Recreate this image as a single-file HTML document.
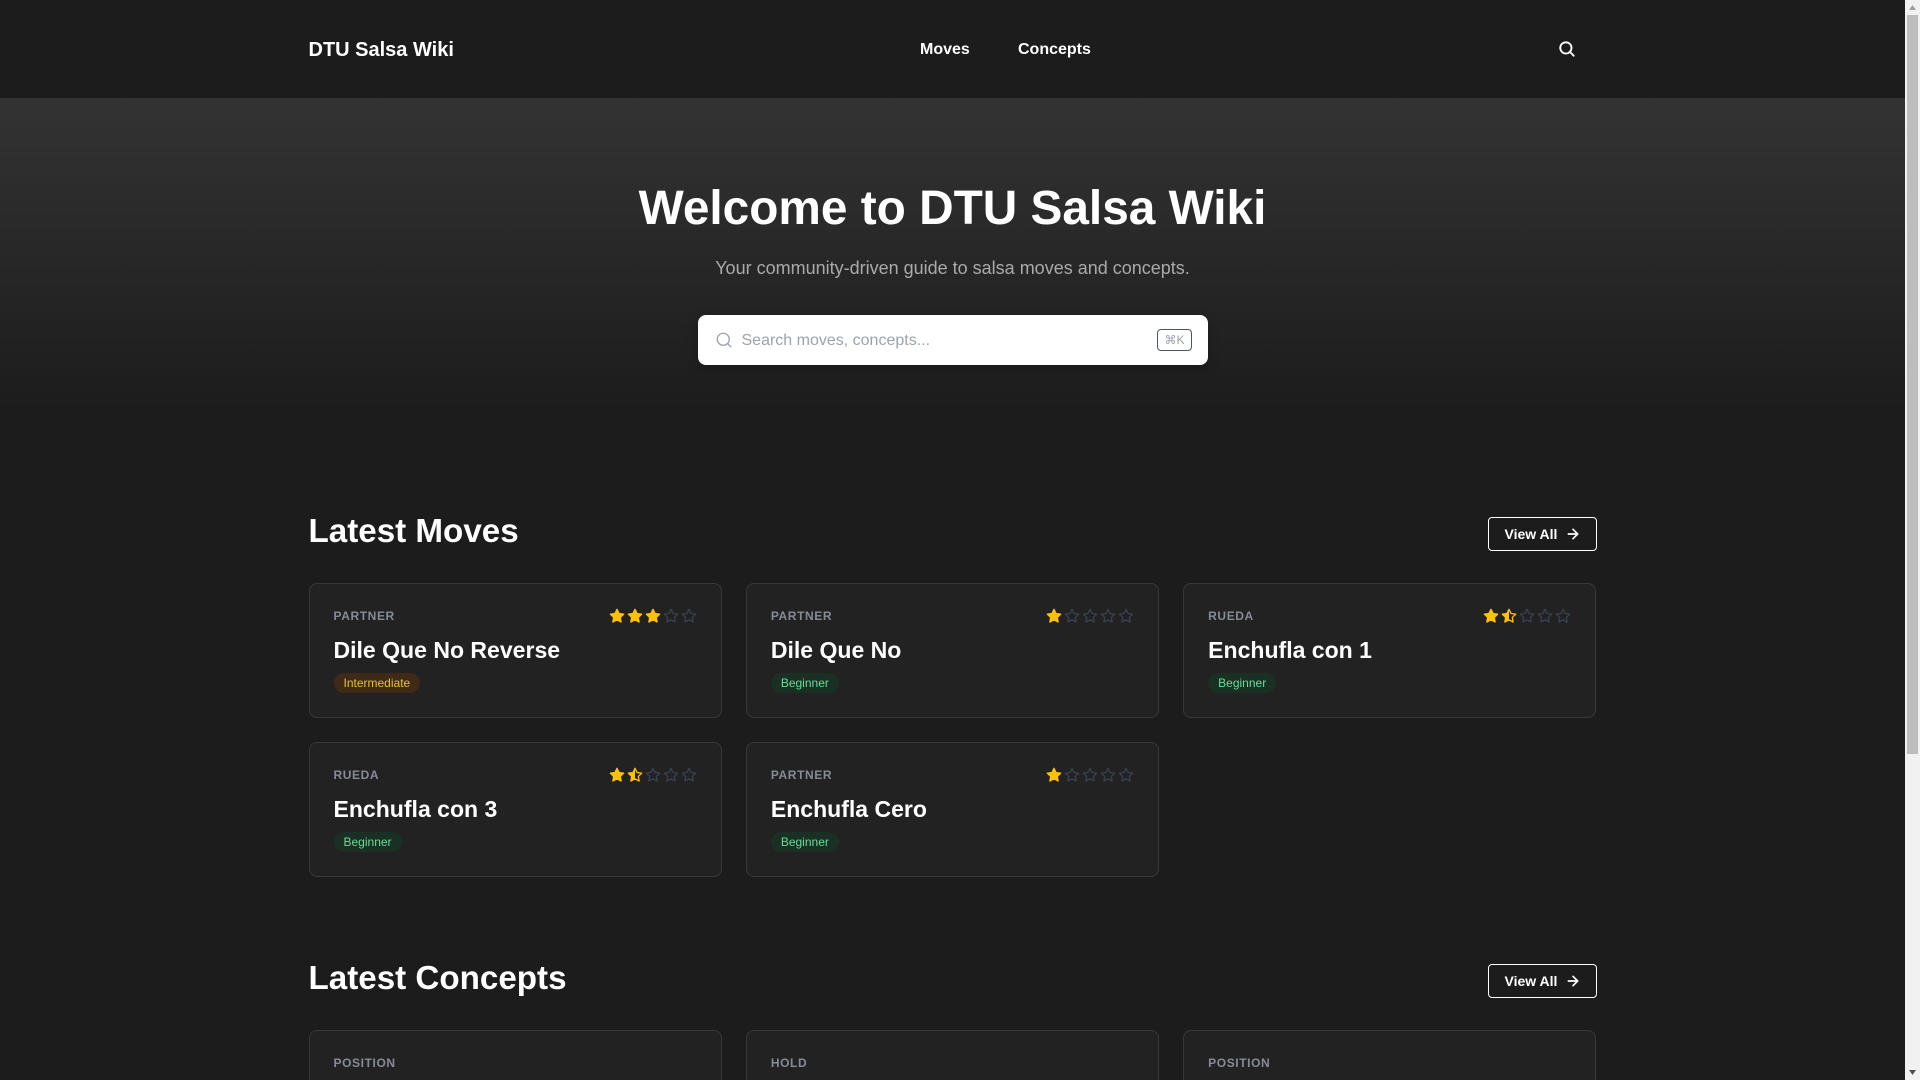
<!DOCTYPE html>
<html lang="en"><head><meta charset="utf-8"><title>DTU Salsa Wiki</title>
<style>
*{box-sizing:border-box;margin:0;padding:0}
html,body{width:1920px;height:1080px;overflow:hidden;background:#1c1c1c}
body{position:relative;font-family:"Liberation Sans",sans-serif;color:#fff}
.t{position:absolute;white-space:nowrap}
nav{position:absolute;left:0;top:0;width:1905px;height:98px;background:#1c1c1c}
.hero{position:absolute;left:0;top:98px;width:1905px;height:315px;background:linear-gradient(180deg,#333 0%,#1c1c1c 100%)}
.nl{font-size:16px;font-weight:700;line-height:20px;top:40px}
h1.t{left:0;width:1905px;text-align:center;top:181px;font-size:47.78px;line-height:56px;font-weight:700}
.sub{left:0;width:1905px;text-align:center;top:257px;font-size:18px;line-height:22px;color:#aaa}
.search{position:absolute;left:698px;top:315px;width:510px;height:50px;background:#fff;border-radius:8px;box-shadow:0 4px 12px rgba(0,0,0,.2)}
.ph{left:43.5px;top:16px;font-size:16px;line-height:20px;color:#9ca3af}
.kbd{position:absolute;left:459px;top:14px;width:35px;height:22px;border:1px solid #4b5563;border-radius:4px;font-size:12px;line-height:20px;text-align:center;color:#9ca3af;font-family:"Liberation Sans","DejaVu Sans",sans-serif}
h2.t{left:308.5px;font-size:33.18px;line-height:40px;font-weight:700}
.btn{position:absolute;left:1488px;width:109px;height:34px;border:1px solid #fff;border-radius:4px;font-size:14px;font-weight:700;line-height:32px;padding-left:15.5px;color:#fff}
.btn svg{position:absolute;left:76px;top:8px}
.card{position:absolute;width:413.33px;height:135px;background:#222;border:1px solid #383838;border-radius:8px}
.lab{left:24px;top:24px;font-size:12px;line-height:16px;font-weight:700;letter-spacing:.6px;color:#868b97}
.ti{left:24px;top:51px;font-size:23.04px;line-height:30px;font-weight:700}
.bd{position:absolute;left:24px;top:89px;height:20px;border-radius:10px;padding:0 10px;font-size:12px;line-height:20px}
.be{background:#1a3024;color:#68dc96}
.in{background:#3f2a17;color:#e6c31f}
.st{position:absolute;right:24px;top:24px;width:88px;height:16px;display:flex;gap:2px}
.st svg{width:16px;height:16px;display:block;flex:none}
.sb{position:absolute;left:1905px;top:0;width:15px;height:1080px;background:#f1f1f1}
.th{position:absolute;left:2px;top:15px;width:11px;height:739px;background:#bdbdbd}
</style></head><body>
<svg width="0" height="0" style="position:absolute"><defs>
<linearGradient id="h"><stop offset="50%" stop-color="#ffc107"/><stop offset="50%" stop-color="#222"/></linearGradient>
<polygon id="s" points="12 2 15.09 8.26 22 9.27 17 14.14 18.18 21.02 12 17.77 5.82 21.02 7 14.14 2 9.27 8.91 8.26" stroke-width="2" stroke-linejoin="round"/>
<symbol id="f" viewBox="0 0 24 24"><use href="#s" fill="#ffc107" stroke="#ffc107"/></symbol>
<symbol id="e" viewBox="0 0 24 24"><use href="#s" fill="none" stroke="#374151"/></symbol>
<symbol id="a" viewBox="0 0 24 24"><use href="#s" fill="url(#h)" stroke="#ffc107"/></symbol>
</defs></svg>

<nav>
<div class="t" style="left:308.5px;font-size:20px;line-height:24px;font-weight:700;top:38px">DTU Salsa Wiki</div>
<div class="t nl" style="left:920px">Moves</div>
<div class="t nl" style="left:1018px">Concepts</div>
<svg style="position:absolute;left:1558px;top:40px" width="18" height="18" viewBox="0 0 24 24" fill="none" stroke="#fff" stroke-width="2.5" stroke-linecap="round" stroke-linejoin="round"><circle cx="10.5" cy="10.5" r="7.5"/><line x1="21" y1="21" x2="15.8" y2="15.8"/></svg>
</nav>

<div class="hero"></div>
<h1 class="t">Welcome to DTU Salsa Wiki</h1>
<div class="t sub">Your community-driven guide to salsa moves and concepts.</div>
<div class="search">
<svg style="position:absolute;left:17px;top:16px" width="18" height="18" viewBox="0 0 24 24" fill="none" stroke="#9ca3af" stroke-width="1.8" stroke-linecap="round" stroke-linejoin="round"><circle cx="11" cy="11" r="8"/><line x1="21" y1="21" x2="16.65" y2="16.65"/></svg>
<div class="t ph">Search moves, concepts...</div>
<div class="kbd">⌘K</div>
</div>

<h2 class="t" style="top:512px">Latest Moves</h2>
<div class="btn" style="top:517px">View All<svg width="16" height="16" viewBox="0 0 24 24" fill="none" stroke="#fff" stroke-width="2.5" stroke-linecap="round" stroke-linejoin="round"><line x1="5" y1="12" x2="19" y2="12"/><polyline points="12 5 19 12 12 19"/></svg></div>

<div class="card" style="left:308.5px;top:583px"><div class="t lab">PARTNER</div><div class="st"><svg><use href="#f"/></svg><svg><use href="#f"/></svg><svg><use href="#f"/></svg><svg><use href="#e"/></svg><svg><use href="#e"/></svg></div><div class="t ti">Dile Que No Reverse</div><div class="bd in">Intermediate</div></div>
<div class="card" style="left:745.83px;top:583px"><div class="t lab">PARTNER</div><div class="st"><svg><use href="#f"/></svg><svg><use href="#e"/></svg><svg><use href="#e"/></svg><svg><use href="#e"/></svg><svg><use href="#e"/></svg></div><div class="t ti">Dile Que No</div><div class="bd be">Beginner</div></div>
<div class="card" style="left:1183.17px;top:583px"><div class="t lab">RUEDA</div><div class="st"><svg><use href="#f"/></svg><svg><use href="#a"/></svg><svg><use href="#e"/></svg><svg><use href="#e"/></svg><svg><use href="#e"/></svg></div><div class="t ti">Enchufla con 1</div><div class="bd be">Beginner</div></div>
<div class="card" style="left:308.5px;top:742px"><div class="t lab">RUEDA</div><div class="st"><svg><use href="#f"/></svg><svg><use href="#a"/></svg><svg><use href="#e"/></svg><svg><use href="#e"/></svg><svg><use href="#e"/></svg></div><div class="t ti">Enchufla con 3</div><div class="bd be">Beginner</div></div>
<div class="card" style="left:745.83px;top:742px"><div class="t lab">PARTNER</div><div class="st"><svg><use href="#f"/></svg><svg><use href="#e"/></svg><svg><use href="#e"/></svg><svg><use href="#e"/></svg><svg><use href="#e"/></svg></div><div class="t ti">Enchufla Cero</div><div class="bd be">Beginner</div></div>

<h2 class="t" style="top:959px">Latest Concepts</h2>
<div class="btn" style="top:964px">View All<svg width="16" height="16" viewBox="0 0 24 24" fill="none" stroke="#fff" stroke-width="2.5" stroke-linecap="round" stroke-linejoin="round"><line x1="5" y1="12" x2="19" y2="12"/><polyline points="12 5 19 12 12 19"/></svg></div>

<div class="card" style="left:308.5px;top:1030px"><div class="t lab">POSITION</div></div>
<div class="card" style="left:745.83px;top:1030px"><div class="t lab">HOLD</div></div>
<div class="card" style="left:1183.17px;top:1030px"><div class="t lab">POSITION</div></div>

<div class="sb"><div class="th"></div>
<svg style="position:absolute;left:0;top:0" width="15" height="15"><polygon points="7.5,5 11,10 4,10" fill="#a0a0a0"/></svg>
<svg style="position:absolute;left:0;top:1065px" width="15" height="15"><polygon points="4,5 11,5 7.5,10" fill="#505050"/></svg>
</div>
</body></html>
